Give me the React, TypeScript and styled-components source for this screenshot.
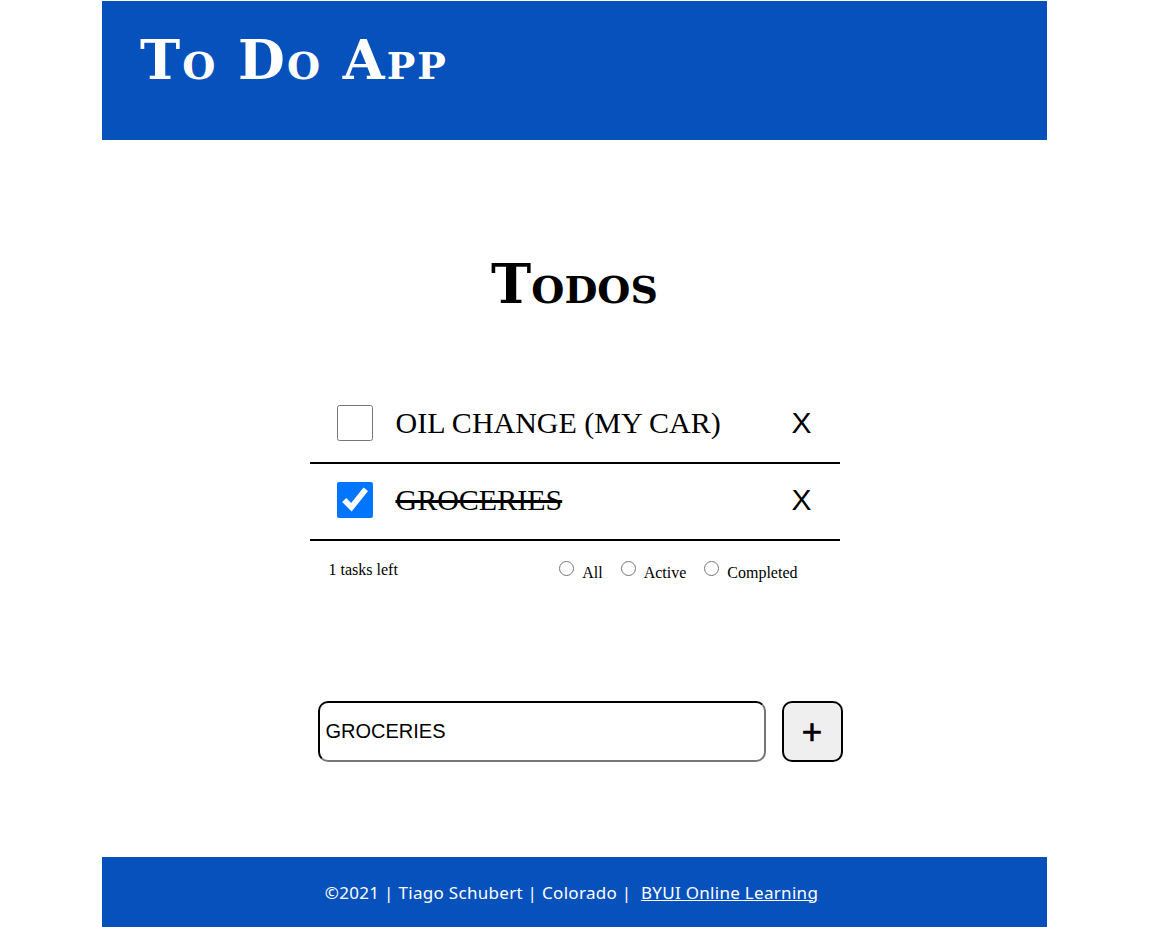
import React from "react";
import styled, { createGlobalStyle } from "styled-components";

const Global = createGlobalStyle`
  html, body { margin: 0; padding: 0; background: #fff; }
  body { font-family: "Liberation Serif", serif; color: #000; }
`;

const Page = styled.div`
  width: 945px;
  margin: 1px 0 0 102px;
  display: flex;
  flex-direction: column;
`;

const Header = styled.header`
  height: 139px;
  background: #0751bc;
  display: flex;
  align-items: center;
  padding: 0 0 22px 38px;
  box-sizing: border-box;
`;

const AppTitle = styled.h1`
  margin: 0;
  font-family: "DejaVu Serif", serif;
  font-variant: small-caps;
  font-weight: bold;
  font-size: 54px;
  letter-spacing: 2px;
  color: #fff;
  line-height: 1;
`;

const Main = styled.main`
  display: flex;
  flex-direction: column;
  align-items: center;
  padding-top: 117px;
`;

const Title = styled.h2`
  margin: 0;
  font-family: "DejaVu Serif", serif;
  font-variant: small-caps;
  font-weight: bold;
  font-size: 54px;
  line-height: 1;
`;

const List = styled.ul`
  list-style: none;
  margin: 76px 0 0;
  padding: 0;
  width: 530px;
`;

const Item = styled.li`
  display: flex;
  align-items: center;
  height: 72px;
  padding: 0 28px 3px 27px;
  box-sizing: content-box;
  border-bottom: 2px solid #000;
`;

const Check = styled.input`
  width: 36px;
  height: 36px;
  margin: 0 23px 0 0;
`;

const ItemText = styled.span<{ $done?: boolean }>`
  flex: 1;
  font-family: "Liberation Serif", serif;
  font-size: 30px;
  text-transform: uppercase;
  text-decoration: ${(p) => (p.$done ? "line-through" : "none")};
  text-decoration-thickness: 3px;
`;

const Remove = styled.button`
  border: none;
  background: none;
  padding: 0;
  font-family: "Liberation Sans", sans-serif;
  font-size: 30px;
  color: #000;
  cursor: pointer;
`;

const Filters = styled.div`
  width: 530px;
  display: flex;
  justify-content: space-between;
  padding: 20px 42px 0 19px;
  box-sizing: border-box;
  font-size: 16px;
`;

const Left = styled.span``;

const RadioGroup = styled.div`
  display: flex;
  gap: 18px;
`;

const RadioLabel = styled.label`
  display: flex;
  align-items: flex-start;
  input {
    margin: 0 8px 0 0;
    width: 15px;
    height: 15px;
  }
  span {
    padding-top: 3px;
  }
`;

const Form = styled.form`
  display: flex;
  gap: 16px;
  margin-top: 119px;
  margin-left: 11px;
`;

const TextInput = styled.input`
  width: 448px;
  height: 61px;
  box-sizing: border-box;
  border: 2px inset #767676;
  border-top-color: #1a1a1a;
  border-left-color: #1a1a1a;
  border-radius: 10px;
  padding: 0 6px;
  font-family: "Liberation Sans", sans-serif;
  font-size: 20px;
  color: #000;
`;

const AddButton = styled.button`
  width: 61px;
  height: 61px;
  box-sizing: border-box;
  border: 2px solid #000;
  border-radius: 10px;
  background: #efefef;
  font-family: "Liberation Sans", sans-serif;
  font-size: 35px;
  -webkit-text-stroke: 0.7px #000;
  line-height: 1;
  color: #000;
  padding: 0 0 1px;
`;

const Footer = styled.footer`
  margin-top: 95px;
  height: 70px;
  background: #0751bc;
  display: flex;
  align-items: center;
  justify-content: center;
  font-family: "Noto Sans", sans-serif;
  font-size: 17px;
  letter-spacing: 0.3px;
  color: #fff;
  white-space: pre;
  padding-right: 6px;
  a { color: #fff; }
`;

export default function App() {
  return (
    <>
      <Global />
      <Page>
        <Header>
          <AppTitle>To Do App</AppTitle>
        </Header>
        <Main>
          <Title>Todos</Title>
          <List>
            <Item>
              <Check type="checkbox" readOnly />
              <ItemText>Oil change (my car)</ItemText>
              <Remove>X</Remove>
            </Item>
            <Item>
              <Check type="checkbox" checked readOnly />
              <ItemText $done>Groceries</ItemText>
              <Remove>X</Remove>
            </Item>
          </List>
          <Filters>
            <Left>1 tasks left</Left>
            <RadioGroup>
              <RadioLabel>
                <input type="radio" name="f" />
                <span>All</span>
              </RadioLabel>
              <RadioLabel>
                <input type="radio" name="f" />
                <span>Active</span>
              </RadioLabel>
              <RadioLabel>
                <input type="radio" name="f" />
                <span>Completed</span>
              </RadioLabel>
            </RadioGroup>
          </Filters>
          <Form onSubmit={(e) => e.preventDefault()}>
            <TextInput defaultValue="GROCERIES" />
            <AddButton type="submit">+</AddButton>
          </Form>
        </Main>
        <Footer>
          {"©2021 | Tiago Schubert | Colorado |  "}
          <a href="#">BYUI Online Learning</a>
        </Footer>
      </Page>
    </>
  );
}
